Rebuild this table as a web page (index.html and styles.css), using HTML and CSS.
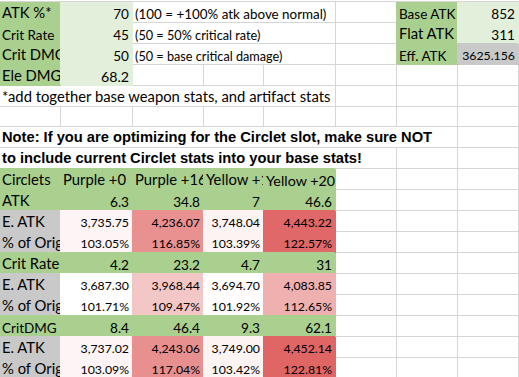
FILE: index.html
```html
<!DOCTYPE html>
<html>
<head>
<meta charset="utf-8">
<link rel="stylesheet" href="styles.css">
</head>
<body>
<div class="sheet">
  <!-- row 1 -->
  <div class="c f g">ATK %*</div>
  <div class="c f lg r n">70</div>
  <div class="c span3 t1">(100 = +100% atk above normal)</div>
  <div class="c"></div>
  <div class="c f g s">Base ATK</div>
  <div class="c f lg r n">852</div>
  <!-- row 2 -->
  <div class="c f g s">Crit Rate</div>
  <div class="c f lg r n">45</div>
  <div class="c span3 t2">(50 = 50% critical rate)</div>
  <div class="c"></div>
  <div class="c f g">Flat ATK</div>
  <div class="c f lg r n">311</div>
  <!-- row 3 -->
  <div class="c f g">Crit DMG</div>
  <div class="c f lg r n">50</div>
  <div class="c span3 t2">(50 = base critical damage)</div>
  <div class="c"></div>
  <div class="c f g s">Eff. ATK</div>
  <div class="c f gr r ns">3625.156</div>
  <!-- row 4 -->
  <div class="c f g">Ele DMG</div>
  <div class="c f lg r nb">68.2</div>
  <div class="c"></div><div class="c"></div><div class="c"></div><div class="c"></div><div class="c"></div><div class="c"></div>
  <!-- row 5 -->
  <div class="c span5">*add together base weapon stats, and artifact stats</div>
  <div class="c"></div><div class="c"></div><div class="c"></div>
  <!-- row 6 -->
  <div class="c"></div><div class="c"></div><div class="c"></div><div class="c"></div><div class="c"></div><div class="c"></div><div class="c"></div><div class="c"></div>
  <!-- row 7 -->
  <div class="c span7 b">Note: If you are optimizing for the Circlet slot, make sure NOT</div>
  <div class="c"></div>
  <!-- row 8 -->
  <div class="c span6 b">to include current Circlet stats into your base stats!</div>
  <div class="c"></div><div class="c"></div>
  <!-- row 9 -->
  <div class="c f g">Circlets</div>
  <div class="c f g">Purple +0</div>
  <div class="c f g">Purple +16</div>
  <div class="c f g">Yellow +10</div>
  <div class="c f g h">Yellow +20</div>
  <div class="c"></div><div class="c"></div><div class="c"></div>
  <!-- row 10 -->
  <div class="c f g">ATK</div>
  <div class="c f g r n">6.3</div>
  <div class="c f g r n">34.8</div>
  <div class="c f g r n">7</div>
  <div class="c f g r n">46.6</div>
  <div class="c"></div><div class="c"></div><div class="c"></div>
  <!-- row 11 -->
  <div class="c f gr">E. ATK</div>
  <div class="c f r ns" style="--bg:#fdf5f5">3,735.75</div>
  <div class="c f r ns" style="--bg:#e99191">4,236.07</div>
  <div class="c f r ns" style="--bg:#fdf3f3">3,748.04</div>
  <div class="c f r ns" style="--bg:#e06868">4,443.22</div>
  <div class="c"></div><div class="c"></div><div class="c"></div>
  <!-- row 12 -->
  <div class="c f gr">% of Original</div>
  <div class="c f r ns" style="--bg:#fdf5f5">103.05%</div>
  <div class="c f r ns" style="--bg:#e99191">116.85%</div>
  <div class="c f r ns" style="--bg:#fdf3f3">103.39%</div>
  <div class="c f r ns" style="--bg:#e06868">122.57%</div>
  <div class="c"></div><div class="c"></div><div class="c"></div>
  <!-- row 13 -->
  <div class="c f g">Crit Rate</div>
  <div class="c f g r n">4.2</div>
  <div class="c f g r n">23.2</div>
  <div class="c f g r n">4.7</div>
  <div class="c f g r n">31</div>
  <div class="c"></div><div class="c"></div><div class="c"></div>
  <!-- row 14 -->
  <div class="c f gr">E. ATK</div>
  <div class="c f r ns" style="--bg:#ffffff">3,687.30</div>
  <div class="c f r ns" style="--bg:#f4c7c7">3,968.44</div>
  <div class="c f r ns" style="--bg:#fffdfd">3,694.70</div>
  <div class="c f r ns" style="--bg:#efb0b0">4,083.85</div>
  <div class="c"></div><div class="c"></div><div class="c"></div>
  <!-- row 15 -->
  <div class="c f gr">% of Original</div>
  <div class="c f r ns" style="--bg:#ffffff">101.71%</div>
  <div class="c f r ns" style="--bg:#f4c7c7">109.47%</div>
  <div class="c f r ns" style="--bg:#fffdfd">101.92%</div>
  <div class="c f r ns" style="--bg:#efb0b0">112.65%</div>
  <div class="c"></div><div class="c"></div><div class="c"></div>
  <!-- row 16 -->
  <div class="c f g s">CritDMG</div>
  <div class="c f g r n">8.4</div>
  <div class="c f g r n">46.4</div>
  <div class="c f g r n">9.3</div>
  <div class="c f g r n">62.1</div>
  <div class="c"></div><div class="c"></div><div class="c"></div>
  <!-- row 17 -->
  <div class="c f gr">E. ATK</div>
  <div class="c f r ns" style="--bg:#fdf5f5">3,737.02</div>
  <div class="c f r ns" style="--bg:#e89090">4,243.06</div>
  <div class="c f r ns" style="--bg:#fcf3f3">3,749.00</div>
  <div class="c f r ns" style="--bg:#e06666">4,452.14</div>
  <div class="c"></div><div class="c"></div><div class="c"></div>
  <!-- row 18 -->
  <div class="c f gr">% of Original</div>
  <div class="c f r ns" style="--bg:#fdf5f5">103.09%</div>
  <div class="c f r ns" style="--bg:#e89090">117.04%</div>
  <div class="c f r ns" style="--bg:#fcf3f3">103.42%</div>
  <div class="c f r ns" style="--bg:#e06666">122.81%</div>
  <div class="c"></div><div class="c"></div><div class="c"></div>
</div>
</body>
</html>
```
FILE: styles.css
```css
* { box-sizing: border-box; margin: 0; padding: 0; }
html, body { background: #ffffff; }
body {
  margin: 0;
  font-family: Lato, "Liberation Sans", sans-serif;
  color: #000000;
}
.sheet {
  display: grid;
  grid-template-columns: 61px 72px 71px 60px 72px 61px 61px 61px;
  grid-template-rows: repeat(5, 21px) 20px repeat(12, 21px);
  margin-top: 1px;
  border-top: 1px solid #d6d6d6;
  width: 519px;
  overflow: hidden;
}
.c {
  border-right: 1px solid #d6d6d6;
  border-bottom: 1px solid #d6d6d6;
  display: flex;
  align-items: flex-end;
  padding: 0 2px 0 2px;
  white-space: nowrap;
  overflow: hidden;
  font-size: 14.8px;
  line-height: 1.2;
}
.f {
  background: var(--bg);
  border-color: var(--bg);
  box-shadow: -1px -1px 0 0 var(--bg);
}
.g { --bg: #a9d08e; }
.lg { --bg: #e2efda; }
.gr { --bg: #c9c9c9; }
.r { justify-content: flex-end; padding-right: 3px; }
.s { font-size: 13.5px; }
.n { font-size: 13.6px; }
.nb { font-size: 14.2px; }
.ns { font-size: 12.3px; }
.h { font-size: 14.3px; }
.t1 { font-size: 13.4px; }
.t2 { font-size: 12.7px; }
.span3 { grid-column: span 3; }
.span5 { grid-column: span 5; }
.span6 { grid-column: span 6; }
.span7 { grid-column: span 7; }
.b {
  font-family: "Liberation Sans", Arial, sans-serif;
  font-weight: bold;
  font-size: 14.7px;
}
```
